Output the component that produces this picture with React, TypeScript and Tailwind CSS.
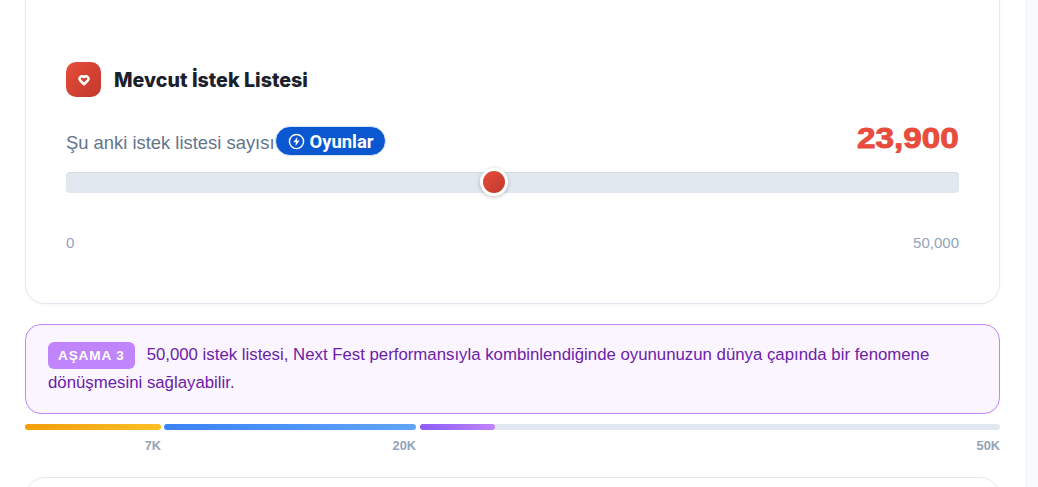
const Heart = () => (
  <svg width="12" height="12" viewBox="0 0 24 24" fill="none" stroke="white" strokeWidth="5" strokeLinejoin="round">
    <path d="M12 20.5 4.6 13a5 5 0 0 1 0-7 4.9 4.9 0 0 1 7 0l.4.4.4-.4a4.9 4.9 0 0 1 7 0 5 5 0 0 1 0 7Z" />
  </svg>
);

const BoltCircle = () => (
  <svg width="17" height="17" viewBox="0 0 24 24" fill="none">
    <circle cx="12" cy="12" r="10" stroke="white" strokeWidth="2" />
    <path d="M13.2 5.5 7.6 13.2h3.6l-.6 5.3 5.8-7.9h-3.7Z" fill="white" />
  </svg>
);

const App = () => {
  return (
    <div className="h-[487px] w-[1038px] overflow-hidden bg-[#f8fafc] font-['Liberation_Sans',sans-serif]">
      <div className="mr-[11px] h-[560px] border-r border-[#eef0f4] bg-white pl-[25px] pr-[26px]">
        <section className="-mt-[20px] flex h-[324px] flex-col rounded-[20px] border border-[#e2e8f0] bg-white px-10 pt-[81px] shadow-[0_1px_3px_rgba(0,0,0,0.04)]">
          <div className="flex items-center gap-[13px]">
            <div className="flex h-[35px] w-[35px] items-center justify-center rounded-[10px] bg-gradient-to-br from-[#e74c3c] to-[#c0392b]">
              <Heart />
            </div>
            <h2 className="translate-y-px font-['Inter',sans-serif] text-[19.7px] font-extrabold leading-[35px] text-[#1a202c]">
              Mevcut İstek Listesi
            </h2>
          </div>

          <div className="mt-[28px] flex h-[32px] items-center justify-between">
            <div className="flex items-center">
              <span className="translate-y-[2px] text-[18.4px] text-[#64748b]">Şu anki istek listesi sayısı</span>
              <span className="flex h-[30px] items-center gap-[5px] rounded-full border border-[#dbe6f7] bg-[#0b57d0] pl-[12px] pr-[11px] font-['Roboto',sans-serif] text-[18.4px] font-bold text-white">
                <BoltCircle />
                <span className="translate-y-px">Oyunlar</span>
              </span>
            </div>
            <span className="origin-right -translate-y-[3px] scale-x-[1.11] text-[30px] font-black leading-none text-[#e74c3c] [-webkit-text-stroke:0.9px_#e74c3c]">
              23,900
            </span>
          </div>

          <div className="relative mt-[15px] h-[21px] rounded-[4px] bg-[#e2e8f0] shadow-[inset_0_1px_1px_rgba(0,0,0,0.06)]">
            <div className="absolute left-[414px] top-[-4px] h-[28px] w-[28px] rounded-full border-[3px] border-white bg-gradient-to-br from-[#e74c3c] to-[#c0392b] shadow-[0_1px_4px_rgba(0,0,0,0.25)]" />
          </div>

          <div className="mt-[39px] flex justify-between text-[15px] text-[#94a3b8]">
            <span>0</span>
            <span>50,000</span>
          </div>
        </section>

        <div className="mt-[20px] h-[90px] rounded-[16px] border border-[#c084fc] bg-[#faf5ff] px-[22px] py-[16px] text-[16.8px] leading-[28px] text-[#6b21a8]">
          <span className="mr-3 inline-block rounded-[6px] bg-[#c084fc] px-[10px] text-[13.6px] font-bold leading-[27px] tracking-[0.85px] text-white">
            AŞAMA 3
          </span>
          50,000 istek listesi, Next Fest performansıyla kombinlendiğinde oyununuzun dünya çapında bir fenomene dönüşmesini sağlayabilir.
        </div>

        <div className="mt-[10px] flex h-[6px]">
          <div className="w-[136px] rounded-full bg-gradient-to-r from-[#f59e0b] to-[#fbbf24]" />
          <div className="ml-[3px] w-[252px] rounded-full bg-gradient-to-r from-[#3b82f6] to-[#60a5fa]" />
          <div className="ml-[4px] flex-1 rounded-full bg-[#e2e8f0]">
            <div className="h-full w-[75px] rounded-full bg-gradient-to-r from-[#8b5cf6] to-[#c084fc]" />
          </div>
        </div>

        <div className="mt-[7px] flex text-[12.8px] font-bold leading-[18px] text-[#94a3b8]">
          <span className="w-[136px] text-right">7K</span>
          <span className="ml-[3px] w-[252px] text-right">20K</span>
          <span className="ml-[4px] flex-1 text-right">50K</span>
        </div>

        <div className="mt-[22px] h-[60px] rounded-[20px] border border-[#e2e8f0] bg-white" />
      </div>
    </div>
  );
};

export default App;
